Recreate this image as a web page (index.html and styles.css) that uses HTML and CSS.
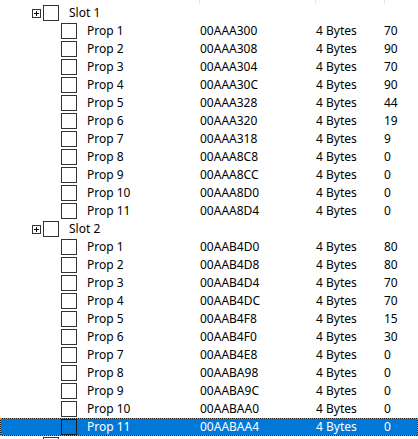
FILE: index.html
```html
<!DOCTYPE html>
<html lang="en">
<head>
    <meta charset="UTF-8">
    <meta name="viewport" content="width=device-width, initial-scale=1.0">
    <title>Slot Properties</title>
    <link rel="stylesheet" href="styles.css">
</head>
<body>
    <div class="tree-list">
        <div class="header">
            <div class="head-cell"></div>
            <div class="head-cell"></div>
            <div class="head-cell"></div>
            <div class="head-cell last"></div>
        </div>

        <div class="row slot">
            <div class="name">
                <svg class="expander" width="9" height="9" viewBox="0 0 9 9"><rect x="0.5" y="0.5" width="8" height="8" fill="#fff" stroke="#333"/><path d="M2 4.5h5M4.5 2v5" stroke="#000"/></svg>
                <span class="check"></span>
                <span class="label">Slot 1</span>
            </div>
        </div>
        <div class="row prop"><div class="name"><span class="check"></span><span class="label">Prop 1</span></div><div>00AAA300</div><div>4 Bytes</div><div>70</div></div>
        <div class="row prop"><div class="name"><span class="check"></span><span class="label">Prop 2</span></div><div>00AAA308</div><div>4 Bytes</div><div>90</div></div>
        <div class="row prop"><div class="name"><span class="check"></span><span class="label">Prop 3</span></div><div>00AAA304</div><div>4 Bytes</div><div>70</div></div>
        <div class="row prop"><div class="name"><span class="check"></span><span class="label">Prop 4</span></div><div>00AAA30C</div><div>4 Bytes</div><div>90</div></div>
        <div class="row prop"><div class="name"><span class="check"></span><span class="label">Prop 5</span></div><div>00AAA328</div><div>4 Bytes</div><div>44</div></div>
        <div class="row prop"><div class="name"><span class="check"></span><span class="label">Prop 6</span></div><div>00AAA320</div><div>4 Bytes</div><div>19</div></div>
        <div class="row prop"><div class="name"><span class="check"></span><span class="label">Prop 7</span></div><div>00AAA318</div><div>4 Bytes</div><div>9</div></div>
        <div class="row prop"><div class="name"><span class="check"></span><span class="label">Prop 8</span></div><div>00AAA8C8</div><div>4 Bytes</div><div>0</div></div>
        <div class="row prop"><div class="name"><span class="check"></span><span class="label">Prop 9</span></div><div>00AAA8CC</div><div>4 Bytes</div><div>0</div></div>
        <div class="row prop"><div class="name"><span class="check"></span><span class="label">Prop 10</span></div><div>00AAA8D0</div><div>4 Bytes</div><div>0</div></div>
        <div class="row prop"><div class="name"><span class="check"></span><span class="label">Prop 11</span></div><div>00AAA8D4</div><div>4 Bytes</div><div>0</div></div>

        <div class="row slot">
            <div class="name">
                <svg class="expander" width="9" height="9" viewBox="0 0 9 9"><rect x="0.5" y="0.5" width="8" height="8" fill="#fff" stroke="#333"/><path d="M2 4.5h5M4.5 2v5" stroke="#000"/></svg>
                <span class="check"></span>
                <span class="label">Slot 2</span>
            </div>
        </div>
        <div class="row prop"><div class="name"><span class="check"></span><span class="label">Prop 1</span></div><div>00AAB4D0</div><div>4 Bytes</div><div>80</div></div>
        <div class="row prop"><div class="name"><span class="check"></span><span class="label">Prop 2</span></div><div>00AAB4D8</div><div>4 Bytes</div><div>80</div></div>
        <div class="row prop"><div class="name"><span class="check"></span><span class="label">Prop 3</span></div><div>00AAB4D4</div><div>4 Bytes</div><div>70</div></div>
        <div class="row prop"><div class="name"><span class="check"></span><span class="label">Prop 4</span></div><div>00AAB4DC</div><div>4 Bytes</div><div>70</div></div>
        <div class="row prop"><div class="name"><span class="check"></span><span class="label">Prop 5</span></div><div>00AAB4F8</div><div>4 Bytes</div><div>15</div></div>
        <div class="row prop"><div class="name"><span class="check"></span><span class="label">Prop 6</span></div><div>00AAB4F0</div><div>4 Bytes</div><div>30</div></div>
        <div class="row prop"><div class="name"><span class="check"></span><span class="label">Prop 7</span></div><div>00AAB4E8</div><div>4 Bytes</div><div>0</div></div>
        <div class="row prop"><div class="name"><span class="check"></span><span class="label">Prop 8</span></div><div>00AABA98</div><div>4 Bytes</div><div>0</div></div>
        <div class="row prop"><div class="name"><span class="check"></span><span class="label">Prop 9</span></div><div>00AABA9C</div><div>4 Bytes</div><div>0</div></div>
        <div class="row prop"><div class="name"><span class="check"></span><span class="label">Prop 10</span></div><div>00AABAA0</div><div>4 Bytes</div><div>0</div></div>
        <div class="row prop selected"><div class="name"><span class="check"></span><span class="label">Prop 11</span></div><div>00AABAA4</div><div>4 Bytes</div><div>0</div></div>

        <div class="row slot">
            <div class="name">
                <svg class="expander" width="9" height="9" viewBox="0 0 9 9"><rect x="0.5" y="0.5" width="8" height="8" fill="#fff" stroke="#333"/><path d="M2 4.5h5M4.5 2v5" stroke="#000"/></svg>
                <span class="check"></span>
            </div>
        </div>
    </div>
</body>
</html>
```

FILE: styles.css
```css
html, body {
    margin: 0;
    height: 100%;
    overflow: hidden;
}
body {
    font-family: "Noto Sans", "Open Sans", sans-serif;
    font-size: 12px;
    color: #000;
    background-color: #ffffff;
}
.tree-list {
    width: 418px;
}
.header {
    display: grid;
    grid-template-columns: 200px 116px 69px 1fr;
    height: 4px;
}
.head-cell {
    border-right: 1px solid #e5e5e5;
}
.head-cell.last {
    border-right: none;
}
.row {
    display: grid;
    grid-template-columns: 200px 116px 68px 1fr;
    height: 18px;
    align-items: center;
    line-height: 18px;
    white-space: nowrap;
    position: relative;
}
.name {
    display: flex;
    align-items: center;
    height: 18px;
}
.slot .name {
    padding-left: 32px;
}
.prop .name {
    padding-left: 61px;
}
.expander {
    display: block;
    margin-right: 2px;
}
.check {
    width: 16px;
    height: 16px;
    box-sizing: border-box;
    border: 1px solid #333;
    margin-right: 10px;
    flex: none;
}
.row.selected {
    background-color: #0078d7;
    color: #ffffff;
    box-shadow: inset 0 0 0 1px #1a1a1a;
}
.row.selected::after {
    content: "";
    position: absolute;
    inset: 0;
    border: 1px dotted #ff8728;
}
.row.selected .check {
    border-color: #1a1a1a;
}
```
